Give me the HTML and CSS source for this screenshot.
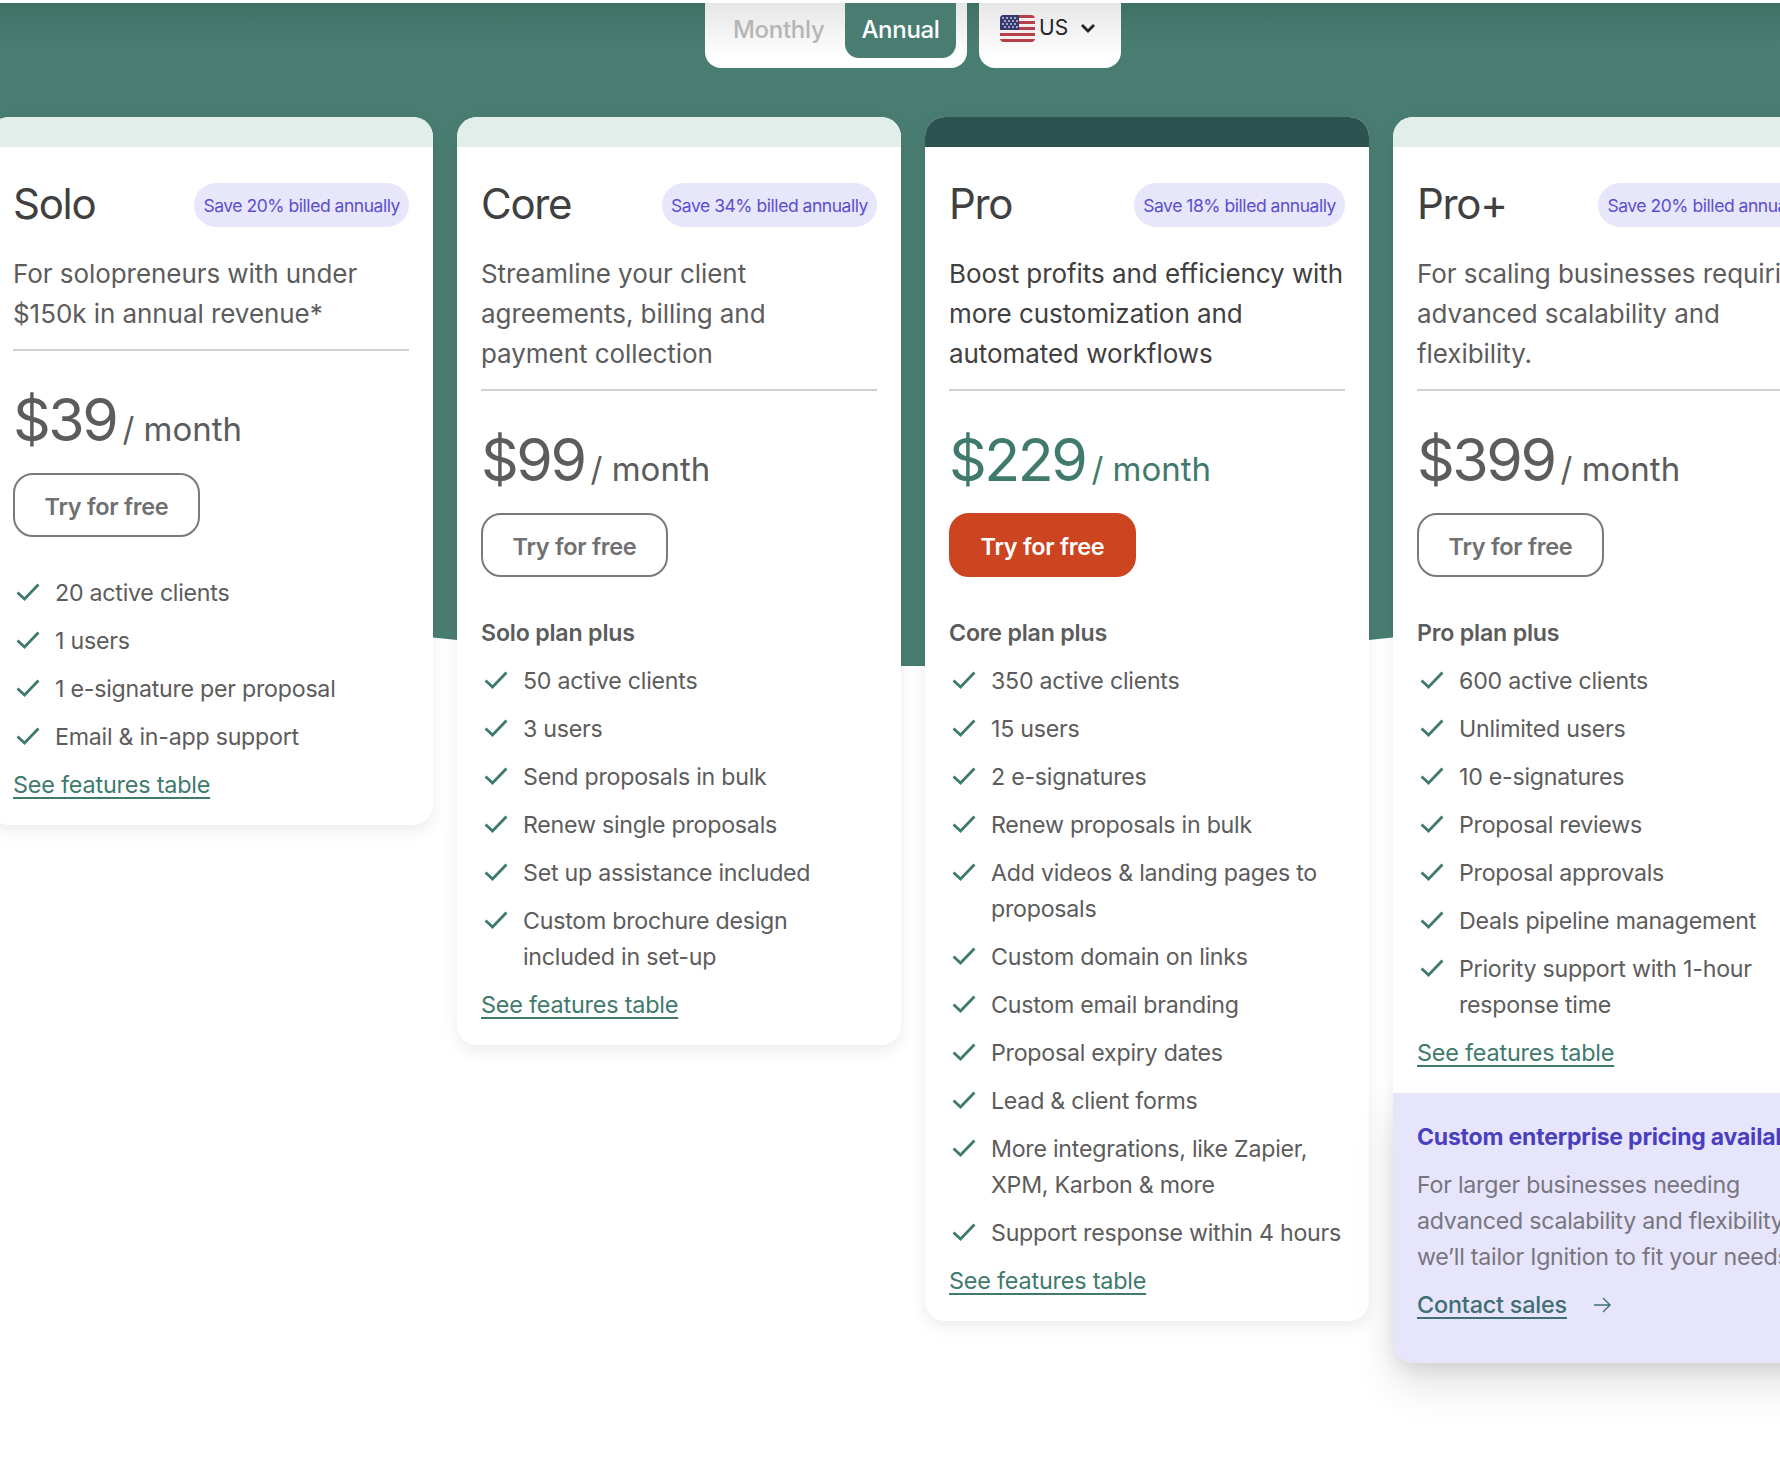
FILE: index.html
```html
<!DOCTYPE html>
<html lang="en">
<head>
<meta charset="utf-8">
<title>Pricing</title>
<link rel="stylesheet" href="styles.css">
</head>
<body>
<svg class="defs" width="0" height="0" aria-hidden="true">
  <symbol id="check" viewBox="0 0 24 20"><path d="M1.5 10.5 L8.5 17 L22.5 2.5" fill="none" stroke="#3f7a6c" stroke-width="2.8"/></symbol>
</svg>
<main class="page">
  <div class="hero"></div>
  <div class="controls">
    <div class="toggle">
      <span class="toggle-opt">Monthly</span>
      <span class="toggle-opt is-on">Annual</span>
    </div>
    <div class="region">
      <svg class="flag" viewBox="0 0 35 27">
        <defs><clipPath id="fc"><rect width="35" height="27" rx="4"/></clipPath></defs>
        <g clip-path="url(#fc)">
          <rect width="35" height="27" fill="#f4eeee"/>
          <g fill="#b5404a">
            <rect y="0" width="35" height="3"/><rect y="6" width="35" height="3"/><rect y="12" width="35" height="3"/><rect y="18" width="35" height="3"/><rect y="24" width="35" height="3"/>
          </g>
          <rect width="19" height="15" fill="#35396f"/>
          <g fill="#c9cbe0">
            <circle cx="3" cy="3" r="1"/><circle cx="7" cy="3" r="1"/><circle cx="11" cy="3" r="1"/><circle cx="15" cy="3" r="1"/>
            <circle cx="5" cy="6" r="1"/><circle cx="9" cy="6" r="1"/><circle cx="13" cy="6" r="1"/><circle cx="17" cy="6" r="1"/>
            <circle cx="3" cy="9" r="1"/><circle cx="7" cy="9" r="1"/><circle cx="11" cy="9" r="1"/><circle cx="15" cy="9" r="1"/>
            <circle cx="5" cy="12" r="1"/><circle cx="9" cy="12" r="1"/><circle cx="13" cy="12" r="1"/><circle cx="17" cy="12" r="1"/>
          </g>
        </g>
      </svg>
      <span class="region-code">US</span>
      <svg class="chev" viewBox="0 0 16 10"><path d="M2 2 L8 8 L14 2" fill="none" stroke="#1d2328" stroke-width="2.8"/></svg>
    </div>
  </div>

  <div class="plans">
    <section class="card">
      <div class="stripe"></div>
      <div class="body">
        <div class="head"><h2>Solo</h2><span class="badge">Save 20% billed annually</span></div>
        <p class="desc">For solopreneurs with under<br>$150k in annual revenue*</p>
        <div class="price"><strong>$39</strong><span>/ month</span></div>
        <a class="btn">Try for free</a>
        <ul class="features first">
          <li><svg class="tick"><use href="#check"/></svg>20 active clients</li>
          <li><svg class="tick"><use href="#check"/></svg>1 users</li>
          <li><svg class="tick"><use href="#check"/></svg>1 e-signature per proposal</li>
          <li><svg class="tick"><use href="#check"/></svg>Email &amp; in-app support</li>
        </ul>
        <a class="link">See features table</a>
      </div>
    </section>

    <section class="card">
      <div class="stripe"></div>
      <div class="body">
        <div class="head"><h2>Core</h2><span class="badge">Save 34% billed annually</span></div>
        <p class="desc">Streamline your client<br>agreements, billing and<br>payment collection</p>
        <div class="price"><strong>$99</strong><span>/ month</span></div>
        <a class="btn">Try for free</a>
        <h3>Solo plan plus</h3>
        <ul class="features">
          <li><svg class="tick"><use href="#check"/></svg>50 active clients</li>
          <li><svg class="tick"><use href="#check"/></svg>3 users</li>
          <li><svg class="tick"><use href="#check"/></svg>Send proposals in bulk</li>
          <li><svg class="tick"><use href="#check"/></svg>Renew single proposals</li>
          <li><svg class="tick"><use href="#check"/></svg>Set up assistance included</li>
          <li><svg class="tick"><use href="#check"/></svg>Custom brochure design<br>included in set-up</li>
        </ul>
        <a class="link">See features table</a>
      </div>
    </section>

    <section class="card featured">
      <div class="stripe"></div>
      <div class="body">
        <div class="head"><h2>Pro</h2><span class="badge">Save 18% billed annually</span></div>
        <p class="desc">Boost profits and efficiency with<br>more customization and<br>automated workflows</p>
        <div class="price"><strong>$229</strong><span>/ month</span></div>
        <a class="btn">Try for free</a>
        <h3>Core plan plus</h3>
        <ul class="features">
          <li><svg class="tick"><use href="#check"/></svg>350 active clients</li>
          <li><svg class="tick"><use href="#check"/></svg>15 users</li>
          <li><svg class="tick"><use href="#check"/></svg>2 e-signatures</li>
          <li><svg class="tick"><use href="#check"/></svg>Renew proposals in bulk</li>
          <li><svg class="tick"><use href="#check"/></svg>Add videos &amp; landing pages to<br>proposals</li>
          <li><svg class="tick"><use href="#check"/></svg>Custom domain on links</li>
          <li><svg class="tick"><use href="#check"/></svg>Custom email branding</li>
          <li><svg class="tick"><use href="#check"/></svg>Proposal expiry dates</li>
          <li><svg class="tick"><use href="#check"/></svg>Lead &amp; client forms</li>
          <li><svg class="tick"><use href="#check"/></svg>More integrations, like Zapier,<br>XPM, Karbon &amp; more</li>
          <li><svg class="tick"><use href="#check"/></svg>Support response within 4 hours</li>
        </ul>
        <a class="link">See features table</a>
      </div>
    </section>

    <section class="card">
      <div class="stripe"></div>
      <div class="body">
        <div class="head"><h2>Pro+</h2><span class="badge">Save 20% billed annually</span></div>
        <p class="desc">For scaling businesses requiring<br>advanced scalability and<br>flexibility.</p>
        <div class="price"><strong>$399</strong><span>/ month</span></div>
        <a class="btn">Try for free</a>
        <h3>Pro plan plus</h3>
        <ul class="features">
          <li><svg class="tick"><use href="#check"/></svg>600 active clients</li>
          <li><svg class="tick"><use href="#check"/></svg>Unlimited users</li>
          <li><svg class="tick"><use href="#check"/></svg>10 e-signatures</li>
          <li><svg class="tick"><use href="#check"/></svg>Proposal reviews</li>
          <li><svg class="tick"><use href="#check"/></svg>Proposal approvals</li>
          <li><svg class="tick"><use href="#check"/></svg>Deals pipeline management</li>
          <li><svg class="tick"><use href="#check"/></svg>Priority support with 1-hour<br>response time</li>
        </ul>
        <a class="link">See features table</a>
      </div>
      <div class="enterprise">
        <h4>Custom enterprise pricing available</h4>
        <p>For larger businesses needing<br>advanced scalability and flexibility,<br>we’ll tailor Ignition to fit your needs.</p>
        <div class="contact">
          <a class="link">Contact sales</a>
          <svg class="arrow" viewBox="0 0 18 16"><path d="M1 8 H17 M10 1 L17 8 L10 15" fill="none" stroke="#3f6f72" stroke-width="1.4"/></svg>
        </div>
      </div>
    </section>
  </div>
</main>
</body>
</html>
```
FILE: styles.css
```css
* { box-sizing: border-box; }
html, body { margin: 0; background: #fff; }
body {
  font-family: "Inter", "Noto Sans", sans-serif;
  color: #5c5c5c;
  width: 1780px;
  height: 1460px;
  overflow: hidden;
}
.defs { position: absolute; }
.page {
  position: relative;
  height: 1460px;
  padding-top: 3px;
  overflow: hidden;
}
.hero {
  position: absolute;
  left: 0;
  top: 3px;
  width: 1780px;
  height: 664px;
  background: linear-gradient(#3f7165 0, #4a7d72 40px);
  clip-path: polygon(0 0, 1780px 0, 1780px 600px, 1393px 634.5px, 1369px 637px, 925px 663px, 901px 663px, 457px 637px, 433px 634.5px, 0 600px);
}
.controls {
  position: relative;
  display: flex;
  gap: 12px;
  margin-left: 705px;
  height: 65px;
}
.toggle, .region {
  background: linear-gradient(#e6e6e6 0, #fff 55px);
  border-radius: 0 0 16px 16px;
  height: 65px;
}
.toggle {
  width: 262px;
  display: flex;
  padding: 0 11px 0 28px;
  justify-content: space-between;
}
.toggle-opt {
  display: flex;
  align-items: center;
  justify-content: center;
  height: 55px;
  padding-bottom: 2px;
  font-size: 24px;
  font-weight: 500;
  letter-spacing: -0.3px;
  color: #b5b5b5;
}
.toggle-opt.is-on {
  width: 111px;
  color: #fff;
  background: #4a7d72;
  border-radius: 0 0 14px 14px;
}
.region {
  width: 142px;
  display: flex;
  align-items: flex-start;
  padding: 12px 0 0 21px;
}
.flag { width: 35px; height: 27px; flex: none; }
.region-code { font-size: 21px; color: #1d2328; margin-left: 4px; line-height: 25px; }
.chev { width: 16px; height: 10px; margin: 8px 0 0 12px; }

.plans {
  position: relative;
  display: flex;
  align-items: flex-start;
  gap: 24px;
  margin: 49px 0 0 -11px;
}
.card {
  flex: none;
  width: 444px;
  background: #fff;
  border-radius: 20px;
  box-shadow: 0 6px 16px rgba(0,0,0,.08);
}
.stripe {
  height: 30px;
  background: #e1eeea;
  border-radius: 20px 20px 0 0;
}
.featured .stripe { background: #2d5351; }
.body { padding: 36px 24px 22px; }
.head {
  display: flex;
  align-items: center;
  justify-content: space-between;
  height: 44px;
}
h2 {
  margin: 0 0 4px;
  font-size: 42px;
  font-weight: 400;
  letter-spacing: -1.3px;
  color: #404040;
}
.badge {
  font-size: 17.5px;
  line-height: 45px;
  height: 44px;
  padding: 0 9px;
  letter-spacing: -0.46px;
  color: #5a4fcf;
  background: #e8e6fb;
  border-radius: 22px;
}
.desc {
  margin: 27px 0 0;
  padding-bottom: 15px;
  font-size: 26px;
  line-height: 40px;
  letter-spacing: -0.06px;
  border-bottom: 2px solid #d0d0d0;
  white-space: nowrap;
}
.featured .desc { color: #404040; }
.price {
  display: flex;
  align-items: baseline;
  gap: 6px;
  margin-top: 34px;
  height: 70px;
  line-height: 70px;
}
.price strong { font-size: 59px; font-weight: 400; letter-spacing: -2.5px; }
.price span { font-size: 33px; }
.featured .price { color: #3f7a6c; }
.btn {
  display: flex;
  align-items: center;
  justify-content: center;
  width: 187px;
  height: 64px;
  margin-top: 18px;
  padding-top: 3px;
  font-size: 23.5px;
  font-weight: 600;
  letter-spacing: -0.3px;
  color: #707070;
  border: 2px solid #7a7a7a;
  border-radius: 20px;
}
.featured .btn { background: #cc4420; border-color: #cc4420; color: #fff; }
h3 {
  margin: 38px 0 0;
  font-size: 23.2px;
  line-height: 36px;
  font-weight: 600;
  letter-spacing: -0.2px;
}
.features {
  list-style: none;
  margin: 12px 0 0;
  padding: 0;
}
.features.first { margin-top: 38px; }
.features li {
  position: relative;
  padding-left: 42px;
  margin-bottom: 12px;
  font-size: 23.2px;
  line-height: 36px;
  letter-spacing: -0.25px;
  white-space: nowrap;
}
.tick {
  position: absolute;
  left: 3px;
  top: 7px;
  width: 24px;
  height: 20px;
}
.link {
  display: inline-block;
  font-size: 23.4px;
  line-height: 36px;
  letter-spacing: -0.2px;
  color: #3f7a6c;
  text-decoration: underline;
  text-decoration-thickness: 2px;
  text-underline-offset: 4px;
}
.enterprise {
  background: #e7e5fb;
  padding: 26px 24px 40px;
  border-radius: 0 0 20px 20px;
  box-shadow: 0 22px 40px rgba(0,0,0,.12);
}
h4 {
  margin: 0;
  font-size: 23px;
  line-height: 36px;
  font-weight: 700;
  letter-spacing: -0.2px;
  color: #4a3fc0;
  white-space: nowrap;
}
.enterprise p {
  margin: 12px 0 0;
  font-size: 23.2px;
  line-height: 36px;
  letter-spacing: -0.25px;
  color: #77767f;
  white-space: nowrap;
}
.contact { display: flex; align-items: center; gap: 26px; margin-top: 12px; }
.contact .link { font-weight: 500; color: #3f6f72; }
.arrow { width: 18px; height: 16px; }
```
